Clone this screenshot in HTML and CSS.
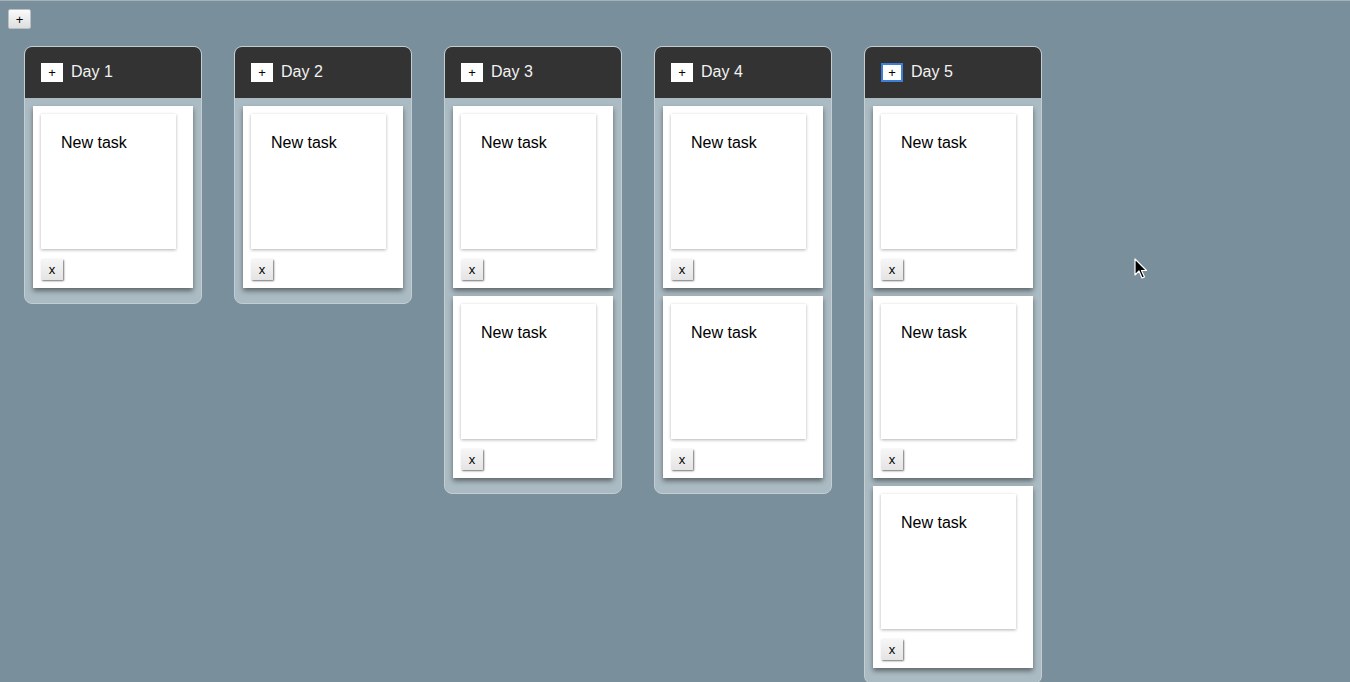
FILE: index.html
```html
<!DOCTYPE html>
<html>
<head>
<meta charset="utf-8">
<link rel="stylesheet" href="styles.css">
</head>
<body>
<button class="add-day">+</button>
<div class="board">
  <section class="day">
    <header class="day-head"><button class="add-task">+</button><span class="day-title">Day 1</span></header>
    <div class="day-body">
      <div class="card"><div class="task">New task</div><button class="del">x</button></div>
    </div>
  </section>
  <section class="day">
    <header class="day-head"><button class="add-task">+</button><span class="day-title">Day 2</span></header>
    <div class="day-body">
      <div class="card"><div class="task">New task</div><button class="del">x</button></div>
    </div>
  </section>
  <section class="day">
    <header class="day-head"><button class="add-task">+</button><span class="day-title">Day 3</span></header>
    <div class="day-body">
      <div class="card"><div class="task">New task</div><button class="del">x</button></div>
      <div class="card"><div class="task">New task</div><button class="del">x</button></div>
    </div>
  </section>
  <section class="day">
    <header class="day-head"><button class="add-task">+</button><span class="day-title">Day 4</span></header>
    <div class="day-body">
      <div class="card"><div class="task">New task</div><button class="del">x</button></div>
      <div class="card"><div class="task">New task</div><button class="del">x</button></div>
    </div>
  </section>
  <section class="day">
    <header class="day-head"><button class="add-task focused">+</button><span class="day-title">Day 5</span></header>
    <div class="day-body">
      <div class="card"><div class="task">New task</div><button class="del">x</button></div>
      <div class="card"><div class="task">New task</div><button class="del">x</button></div>
      <div class="card"><div class="task">New task</div><button class="del">x</button></div>
    </div>
  </section>
</div>
<svg class="cursor" width="14" height="22" viewBox="0 0 14 22"><path d="M1 1 L1 17 L5 13 L8 20 L10.5 19 L7.5 12.5 L12.5 12.5 Z" fill="#000" stroke="#fff" stroke-width="1.2" stroke-linejoin="round"/></svg>
</body>
</html>
```
FILE: styles.css
```css
html {
  overflow: hidden;
  border-top: 1px solid #a3b1b8;
  background: #798f9b;
}
body {
  margin: 8px;
  font-family: "Liberation Sans", Arial, sans-serif;
  position: relative;
}
.add-day {
  display: block;
  width: 23px;
  height: 20px;
  padding: 0;
  margin: 0;
  font: 13px "Liberation Sans", Arial, sans-serif;
  color: #000;
  background: linear-gradient(#fbfbfb, #dedede);
  border: 1px solid #b8c0c4;
  border-radius: 2px;
}
.board {
  display: flex;
  align-items: flex-start;
  gap: 32px;
  padding: 17px 16px 0;
}
.day {
  width: 178px;
  box-sizing: border-box;
  flex: none;
  border: 1px solid #c3cdd2;
  border-radius: 8px;
  background: #abbbc3;
  overflow: hidden;
}
.day-head {
  height: 51px;
  background: #333333;
  display: flex;
  align-items: center;
  gap: 8px;
  padding-left: 16px;
}
.add-task {
  box-sizing: border-box;
  width: 22px;
  height: 19px;
  padding: 0;
  font: 13px "Liberation Sans", Arial, sans-serif;
  color: #000;
  background: #fff;
  border: 1px solid #fff;
  border-radius: 0;
}
.add-task.focused {
  border: 2px solid #3d7fd6;
}
.day-title {
  color: #f2f2f2;
  font-size: 16px;
  margin-bottom: 2px;
}
.day-body {
  padding: 8px 8px 15px;
  display: flex;
  flex-direction: column;
  gap: 8px;
}
.card {
  background: #fff;
  padding: 8px;
  box-shadow: 0 3px 5px rgba(0, 0, 0, 0.45);
}
.task {
  width: 135px;
  height: 135px;
  box-sizing: border-box;
  padding: 20px 20px;
  font-size: 16px;
  color: #000;
  background: #fff;
  box-shadow: 0 1px 3px rgba(0, 0, 0, 0.3);
}
.del {
  display: block;
  margin-top: 10px;
  width: 22px;
  height: 21px;
  padding: 0;
  font: 13px "Liberation Sans", Arial, sans-serif;
  color: #000;
  background: linear-gradient(#f6f6f6, #e4e4e4);
  border: none;
  border-radius: 1px;
  box-shadow: 1px 1px 2px rgba(0, 0, 0, 0.55);
}
.cursor {
  position: absolute;
  left: 1126px;
  top: 249px;
}
```
